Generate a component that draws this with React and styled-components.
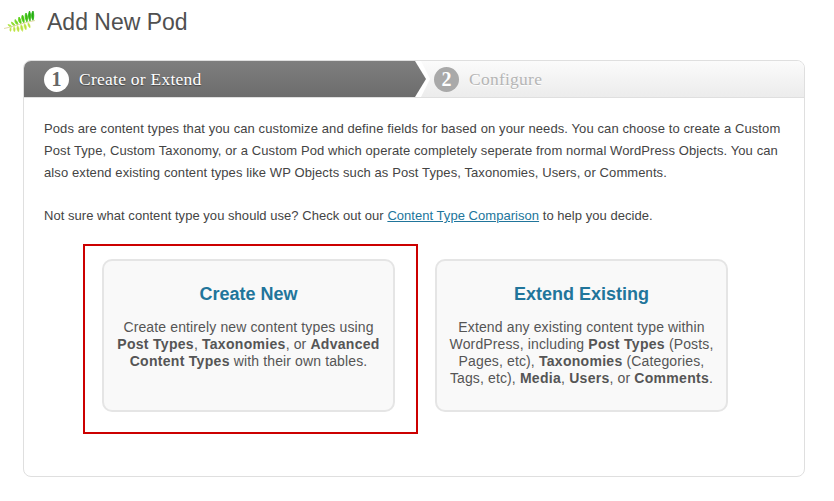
import styled, { createGlobalStyle } from "styled-components";

const Global = createGlobalStyle`
  html, body {
    margin: 0;
    background: #fff;
    font-family: "Liberation Sans", Arial, sans-serif;
    color: #444;
  }
`;

const Page = styled.div`
  width: 834px;
  height: 501px;
  overflow: hidden;
`;

const TitleRow = styled.div`
  display: flex;
  align-items: center;
  height: 44px;
  padding-left: 3px;
`;

const Heading = styled.h2`
  margin: 0 0 0 11px;
  font-size: 23px;
  font-weight: 400;
  line-height: 44px;
  color: #505050;
`;

const Panel = styled.div`
  width: 780px;
  height: 415px;
  margin: 16px 0 0 23px;
  border: 1px solid #dfdfdf;
  border-radius: 8px;
  overflow: hidden;
`;

const Steps = styled.div`
  display: flex;
  height: 36px;
  border-bottom: 1px solid #dfdfdf;
  background: linear-gradient(#fbfbfb, #ececec);
`;

const StepShell = styled.div`
  width: 406px;
  background: #fff;
  clip-path: polygon(0 0, 397px 0, 406px 50%, 397px 100%, 0 100%);
`;

const ActiveStep = styled.div`
  display: flex;
  align-items: center;
  width: 402px;
  height: 100%;
  padding-left: 20px;
  box-sizing: border-box;
  background: linear-gradient(#7e7e7e, #6c6c6c);
  clip-path: polygon(0 0, 391px 0, 402px 50%, 391px 100%, 0 100%);
`;

const IdleStep = styled.div`
  display: flex;
  align-items: center;
  padding-left: 4px;
`;

const Badge = styled.span`
  display: flex;
  align-items: center;
  justify-content: center;
  width: 25px;
  height: 25px;
  border-radius: 50%;
  font: bold 20px "Liberation Serif", Georgia, serif;
  background: ${(props) => (props.active ? "#fff" : "#a9a9a9")};
  color: ${(props) => (props.active ? "#666" : "#fff")};
`;

const StepLabel = styled.span`
  margin-left: 10px;
  font: 17.5px "Liberation Serif", Georgia, serif;
  letter-spacing: 0.25px;
  color: ${(props) => (props.active ? "#fff" : "#b5b5b5")};
  text-shadow: ${(props) => (props.active ? "0 1px 1px #444" : "0 1px 0 #fff")};
`;

const Body = styled.div`
  padding: 20px 20px 0;
`;

const Paragraph = styled.p`
  margin: 0 0 21px;
  font-size: 13px;
  letter-spacing: ${(props) => props.tracking}px;
  line-height: 22px;
  color: #444;

  &:last-of-type {
    margin-bottom: 17px;
  }
`;

const DocLink = styled.a`
  color: #21759b;
  text-decoration: underline;
`;

const Choices = styled.div`
  display: flex;
  align-items: flex-start;
  margin-left: 39px;
`;

const Highlight = styled.div`
  padding: 13px 21px 20px 17px;
  border: 2px solid #c00;
`;

const Card = styled.div`
  box-sizing: border-box;
  width: ${(props) => props.width}px;
  height: 153px;
  margin: ${(props) => props.offset || "0"};
  padding: 22px 10px 0;
  border: 2px solid #e5e5e5;
  border-radius: 10px;
  background: #f9f9f9;
  text-align: center;
`;

const CardTitle = styled.h3`
  margin: 0 0 14px;
  font-size: 18px;
  line-height: 22px;
  font-weight: 700;
  color: #21759b;
`;

const CardText = styled.p`
  margin: 0;
  font-size: 14px;
  letter-spacing: 0.13px;
  line-height: 17px;
  color: #555;

  & b {
    letter-spacing: 0.3px;
  }
`;

const upperLeaves = [
  "M30 10.5C31 7 31 4 30 1C28 4 28 7 30 10.5",
  "M27 11C28 8 28 4 26.5 1C25 4 25 8 27 11",
  "M24 12C25 9 24.5 5 23 3C21.5 5 22 9 24 12",
  "M21 13C21.5 10 21 7 19.5 5C18 7 18.5 10 21 13",
  "M18 14C18.5 11.5 17.5 9 16 7C15 10 15.5 12 18 14",
  "M15 15C15 13 14 11 12 9.5C11.5 12 12.5 14 15 15",
  "M12 16C12 14.5 10.5 13 8.5 12C8.5 14 9.5 15.5 12 16",
  "M9 17C8.5 16 7.5 15 5 14.5C5.5 16 6.5 17 9 17",
];

const lowerLeaves = [
  "M25 12.5C27 14 27.5 16 27 18C25 16.5 24.5 14.5 25 12.5",
  "M21.5 13.5C23.5 15.5 24 17.5 23 20C21 18 20.5 15.5 21.5 13.5",
  "M18 14.5C20 16.5 20.5 19 19.5 21.5C17.5 19.5 17 17 18 14.5",
  "M14.5 15.5C16.5 17.5 16.5 19.5 15.5 22C13.5 20 13.5 18 14.5 15.5",
  "M11 16.5C12.5 18 12.5 20 11.5 22C10 20.5 10 18.5 11 16.5",
  "M7.5 17.5C8.5 18.5 8.5 20 7.5 21.5C6.5 20.5 6.5 19 7.5 17.5",
];

const Fern = () => (
  <svg width="33" height="24" viewBox="0 0 33 24" aria-hidden="true">
    <defs>
      <linearGradient id="fernTop" gradientUnits="userSpaceOnUse" x1="30" y1="1" x2="6" y2="17">
        <stop offset="0" stopColor="#16a80c" />
        <stop offset="0.5" stopColor="#4fcc0e" />
        <stop offset="1" stopColor="#b4e844" />
      </linearGradient>
    </defs>
    {upperLeaves.map((d) => (
      <path key={d} d={d} fill="url(#fernTop)" stroke="url(#fernTop)" strokeWidth="0.8" />
    ))}
    {lowerLeaves.map((d) => (
      <path key={d} d={d} fill="#b8e03c" stroke="#c8e85c" strokeWidth="0.5" />
    ))}
    <path d="M1 18.5C10 17 22 12 32 10.5" fill="none" stroke="#e2d9a8" strokeWidth="1" />
  </svg>
);

const App = () => (
  <Page>
    <Global />
    <TitleRow>
      <Fern />
      <Heading>Add New Pod</Heading>
    </TitleRow>
    <Panel>
      <Steps>
        <StepShell>
          <ActiveStep>
            <Badge active>1</Badge>
            <StepLabel active>Create or Extend</StepLabel>
          </ActiveStep>
        </StepShell>
        <IdleStep>
          <Badge>2</Badge>
          <StepLabel>Configure</StepLabel>
        </IdleStep>
      </Steps>
      <Body>
        <Paragraph tracking={0.1}>
          Pods are content types that you can customize and define fields for based on your needs. You can choose to
          create a Custom Post Type, Custom Taxonomy, or a Custom Pod which operate completely seperate from normal
          WordPress Objects. You can also extend existing content types like WP Objects such as Post Types, Taxonomies,
          Users, or Comments.
        </Paragraph>
        <Paragraph tracking={0.04}>
          Not sure what content type you should use? Check out our <DocLink href="#">Content Type Comparison</DocLink>{" "}
          to help you decide.
        </Paragraph>
        <Choices>
          <Highlight>
            <Card width={293}>
              <CardTitle>Create New</CardTitle>
              <CardText>
                Create entirely new content types using <b>Post Types</b>, <b>Taxonomies</b>, or{" "}
                <b>Advanced Content Types</b> with their own tables.
              </CardText>
            </Card>
          </Highlight>
          <Card width={293} offset="15px 0 0 17px">
            <CardTitle>Extend Existing</CardTitle>
            <CardText>
              Extend any existing content type within WordPress, including <b>Post Types</b> (Posts, Pages, etc),{" "}
              <b>Taxonomies</b> (Categories, Tags, etc), <b>Media</b>, <b>Users</b>, or <b>Comments</b>.
            </CardText>
          </Card>
        </Choices>
      </Body>
    </Panel>
  </Page>
);

export default App;
